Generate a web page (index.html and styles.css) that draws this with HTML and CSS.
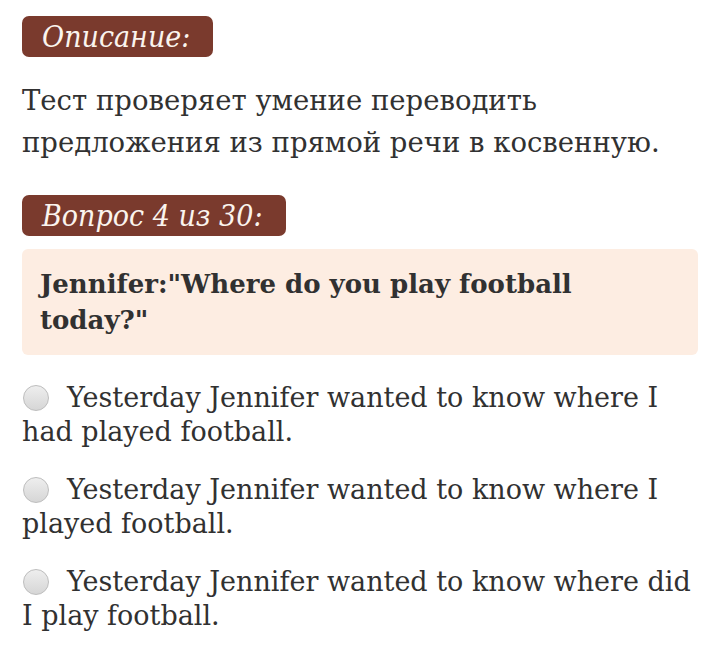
FILE: index.html
```html
<!DOCTYPE html>
<html lang="ru">
<head>
<meta charset="utf-8">
<link rel="stylesheet" href="styles.css">
</head>
<body>
<div class="page">
  <div class="badge">Описание:</div>
  <p class="desc">Тест проверяет умение переводить предложения из прямой речи в косвенную.</p>
  <div class="badge">Вопрос 4 из 30:</div>
  <div class="question">Jennifer:"Where do you play football today?"</div>
  <div class="options">
    <label class="option"><span class="radio"></span>Yesterday Jennifer wanted to know where I had played football.</label>
    <label class="option"><span class="radio"></span>Yesterday Jennifer wanted to know where I played football.</label>
    <label class="option"><span class="radio"></span>Yesterday Jennifer wanted to know where did I play football.</label>
  </div>
</div>
</body>
</html>
```
FILE: styles.css
```css
html, body {
  margin: 0;
  padding: 0;
  background: #ffffff;
}
.page {
  padding: 16px 22px 0 22px;
  font-family: "DejaVu Serif", "Liberation Serif", serif;
  color: #313131;
  display: flex;
  flex-direction: column;
  align-items: flex-start;
}
.badge {
  background: #7a3a2d;
  color: #fbf4ee;
  font-family: "DejaVu Serif Condensed", "DejaVu Serif", serif;
  font-style: italic;
  font-size: 30px;
  line-height: 41px;
  height: 41px;
  padding: 0 23px 0 20px;
  border-radius: 7px;
}
.desc {
  margin: 22px 0 32px 0;
  font-size: 27.5px;
  line-height: 42px;
}
.question {
  margin-top: 13px;
  align-self: stretch;
  background: #fdede2;
  border-radius: 6px;
  padding: 17px 18px 17px 18px;
  font-weight: bold;
  font-size: 26px;
  line-height: 36px;
}
.options {
  margin-top: 26px;
  display: flex;
  flex-direction: column;
  gap: 24px;
}
.option {
  font-size: 27px;
  line-height: 34px;
}
.radio {
  display: inline-block;
  width: 26px;
  height: 26px;
  border-radius: 50%;
  border: 1px solid #bdbdbd;
  background: linear-gradient(#eeeeee, #d6d6d6);
  vertical-align: -4px;
  margin: 0 18px 0 1px;
  box-sizing: border-box;
}
```
